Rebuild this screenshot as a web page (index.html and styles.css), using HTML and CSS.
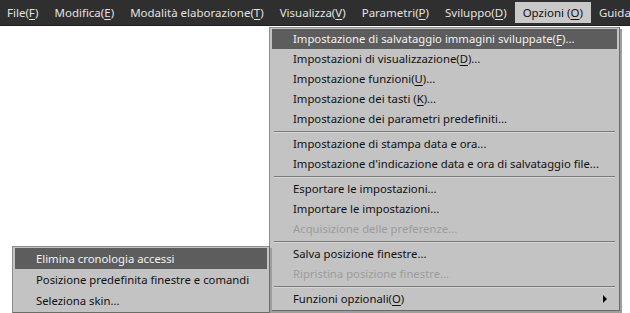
FILE: index.html
```html
<!DOCTYPE html>
<html lang="it">
<head>
    <meta charset="UTF-8">
    <title>Opzioni</title>
    <link rel="stylesheet" href="styles.css">
</head>
<body>
    <div class="menubar">
        <span class="mb-item">File(<u>F</u>)</span>
        <span class="mb-item">Modifica(<u>E</u>)</span>
        <span class="mb-item">Modalità elaborazione(<u>T</u>)</span>
        <span class="mb-item">Visualizza(<u>V</u>)</span>
        <span class="mb-item">Parametri(<u>P</u>)</span>
        <span class="mb-item">Sviluppo(<u>D</u>)</span>
        <span class="mb-item active">Opzioni (<u>O</u>)</span>
        <span class="mb-item">Guida</span>
    </div>

    <div class="menu options-menu">
        <div class="item hover">Impostazione di salvataggio immagini sviluppate(<u>F</u>)...</div>
        <div class="item">Impostazioni di visualizzazione(<u>D</u>)...</div>
        <div class="item">Impostazione funzioni(<u>U</u>)...</div>
        <div class="item">Impostazione dei tasti (<u>K</u>)...</div>
        <div class="item">Impostazione dei parametri predefiniti...</div>
        <div class="sep"></div>
        <div class="item">Impostazione di stampa data e ora...</div>
        <div class="item">Impostazione d'indicazione data e ora di salvataggio file...</div>
        <div class="sep"></div>
        <div class="item">Esportare le impostazioni...</div>
        <div class="item">Importare le impostazioni...</div>
        <div class="item disabled">Acquisizione delle preferenze...</div>
        <div class="sep"></div>
        <div class="item">Salva posizione finestre...</div>
        <div class="item disabled">Ripristina posizione finestre...</div>
        <div class="sep"></div>
        <div class="item has-sub">Funzioni opzionali(<u>O</u>)<span class="arrow"></span></div>
    </div>

    <div class="menu sub-menu">
        <div class="item hover">Elimina cronologia accessi</div>
        <div class="item">Posizione predefinita finestre e comandi</div>
        <div class="item">Seleziona skin...</div>
    </div>
</body>
</html>
```

FILE: styles.css
```css
body {
    margin: 0;
    background-color: #fff;
    font-family: "Noto Sans", "Open Sans", sans-serif;
    font-size: 11.3px;
    color: #000;
    overflow: hidden;
}
u {
    text-decoration-thickness: 1px;
    text-underline-offset: 2px;
}
.menubar {
    display: flex;
    height: 25px;
    background-color: #2f2f2f;
    border-bottom: 1px solid #1e1e1e;
    align-items: center;
    white-space: nowrap;
    font-size: 11.5px;
}
.mb-item {
    color: #e2e2e2;
    padding: 0 8px;
    height: 21px;
    line-height: 21px;
}
.mb-item:first-child {
    padding-left: 7px;
}
.mb-item.active {
    background-color: #c9c9c9;
    color: #111;
}
.menu {
    position: absolute;
    background-color: #c3c3c3;
    border: 1px solid #8c8c8c;
    border-right-color: #6b6b6b;
    border-bottom-color: #6b6b6b;
    box-shadow: 2px 2px 0 #9e9e9e;
    padding: 1px 2px;
    white-space: nowrap;
}
.options-menu {
    left: 269px;
    top: 27px;
    width: 345px;
}
.sub-menu {
    left: 12px;
    top: 246px;
    width: 252px;
}
.item {
    height: 20px;
    line-height: 20px;
    padding-left: 21px;
    color: #111;
    position: relative;
}
.sub-menu .item {
    height: 21px;
    line-height: 21px;
}
.item.hover {
    background-color: #5d5d5d;
    color: #f2f2f2;
}
.item.disabled {
    color: #9c9c9c;
}
.sep {
    height: 1px;
    margin: 2px 2px 1px;
    background-color: #7a7a7a;
    border-bottom: 1px solid #d6d6d6;
}
.arrow {
    position: absolute;
    right: 10px;
    top: 6px;
    border-left: 4px solid #000;
    border-top: 4px solid transparent;
    border-bottom: 4px solid transparent;
}
```
